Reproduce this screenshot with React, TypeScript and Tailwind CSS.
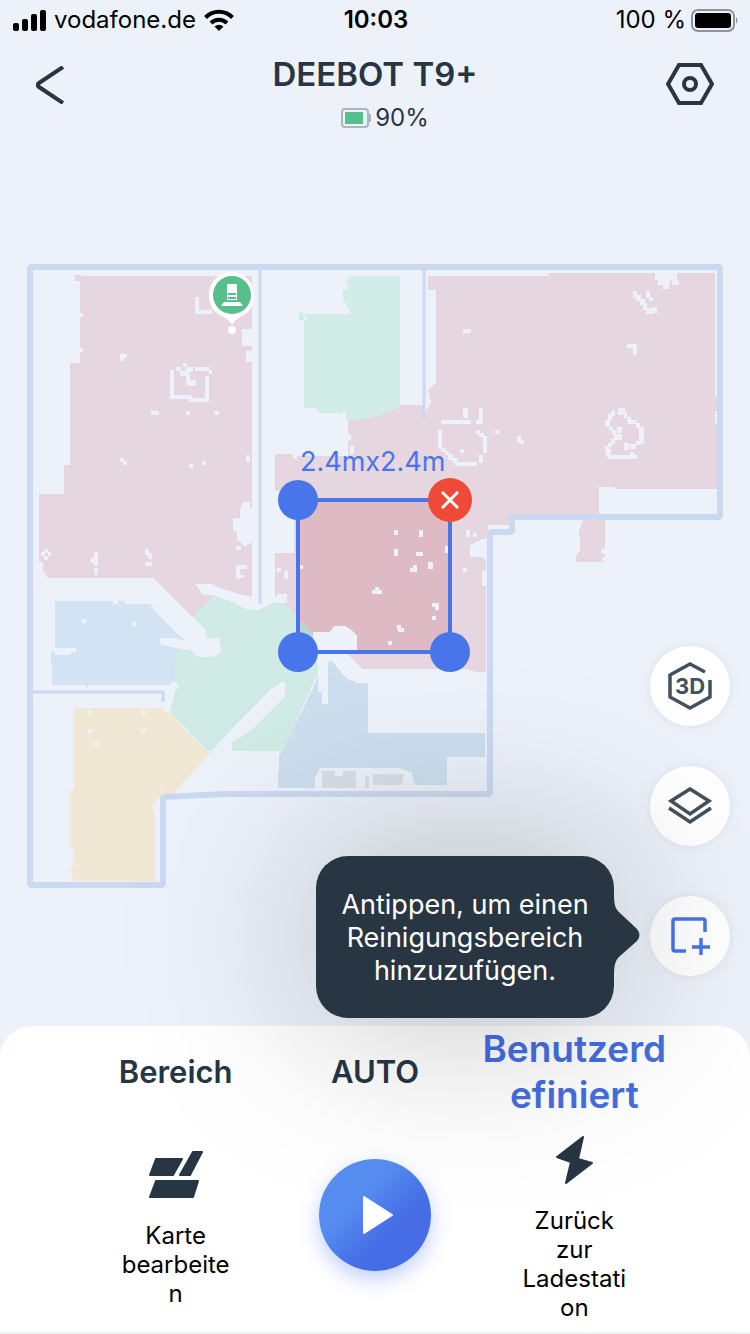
import type { ReactNode } from 'react'

type Rect = [number, number, number, number]

// Small obstacles the robot has found, in map coordinates: x, y, width, height
const obstacles: Rect[] = [
  // living room
  [195, 297, 4, 17], [195, 310, 17, 4], [120, 354, 7, 4], [120, 357, 4, 4], [170, 370, 4, 29],
  [170, 395, 22, 4], [189, 398, 20, 4], [205, 376, 4, 25], [195, 367, 14, 4], [209, 370, 3, 4],
  [183, 363, 4, 4], [176, 367, 5, 4], [180, 371, 9, 5], [186, 367, 7, 5], [186, 374, 4, 11],
  [189, 380, 7, 6], [151, 411, 8, 4], [186, 411, 4, 4], [214, 411, 5, 4], [120, 458, 4, 4],
  [123, 461, 4, 4], [189, 464, 4, 4], [202, 461, 4, 4], [246, 455, 4, 7], [242, 329, 10, 17],
  [246, 351, 6, 11], [80, 313, 3, 4], [79, 348, 4, 4], [44, 549, 4, 4], [44, 556, 4, 4],
  [41, 552, 4, 4], [48, 552, 3, 4], [39, 562, 4, 9], [94, 552, 4, 14], [91, 558, 4, 5],
  [94, 568, 4, 7], [145, 549, 4, 6], [148, 553, 4, 6], [145, 562, 7, 4], [236, 546, 5, 4],
  [236, 565, 4, 14], [236, 565, 11, 4], [236, 575, 8, 3],
  // office and kitchen
  [82, 619, 4, 4], [132, 622, 4, 4], [113, 600, 5, 4], [54, 648, 22, 4], [55, 651, 16, 4],
  [88, 710, 4, 4], [141, 710, 5, 5], [88, 729, 5, 4], [141, 729, 5, 4], [94, 742, 5, 4],
  [303, 311, 4, 4], [304, 316, 3, 4], [344, 285, 4, 4], [346, 276, 4, 3],
  // dining room
  [463, 329, 8, 4], [463, 408, 5, 10], [479, 408, 4, 16], [476, 420, 5, 4], [441, 420, 30, 4],
  [438, 430, 4, 19], [441, 448, 5, 4], [445, 451, 4, 4], [448, 454, 5, 6], [452, 458, 6, 5],
  [455, 462, 22, 4], [479, 455, 4, 8], [483, 436, 4, 17], [479, 433, 5, 4], [476, 430, 4, 4],
  [460, 449, 4, 4], [495, 430, 4, 4], [517, 436, 4, 7], [520, 440, 4, 4], [655, 272, 22, 8],
  [658, 280, 12, 5], [663, 284, 6, 5], [672, 280, 7, 5], [633, 291, 4, 7], [636, 295, 5, 6],
  [640, 299, 5, 6], [643, 303, 4, 7], [646, 308, 7, 6], [653, 307, 4, 6], [646, 291, 4, 7],
  [649, 297, 4, 4], [627, 344, 10, 4], [633, 346, 4, 9], [715, 411, 3, 13],
  [618, 408, 7, 7], [624, 412, 3, 6], [627, 417, 4, 5], [628, 420, 9, 4], [636, 423, 4, 5],
  [639, 427, 5, 17], [636, 441, 5, 4], [630, 444, 6, 5], [624, 443, 5, 7], [608, 455, 29, 4],
  [606, 449, 5, 8], [605, 446, 4, 6], [608, 443, 4, 4], [611, 439, 4, 5], [614, 434, 8, 6],
  [617, 427, 5, 6], [612, 430, 4, 5], [609, 427, 4, 4], [605, 420, 5, 7], [608, 414, 4, 7],
  [611, 411, 4, 5], [630, 452, 4, 4], [601, 549, 4, 5], [602, 557, 3, 4],
  // hallway
  [394, 530, 4, 5], [419, 530, 4, 7], [394, 549, 4, 7], [416, 552, 7, 4], [428, 562, 5, 7],
  [445, 546, 4, 7], [410, 568, 7, 4], [413, 565, 4, 7], [372, 590, 10, 4], [375, 587, 4, 4],
  [432, 603, 7, 4], [435, 606, 4, 4], [432, 616, 4, 4], [397, 625, 4, 5], [398, 628, 6, 4],
  [388, 641, 4, 4], [300, 565, 3, 4], [466, 530, 4, 7], [473, 533, 4, 4], [463, 568, 4, 4],
  [277, 568, 4, 4], [284, 571, 4, 8], [482, 571, 4, 15], [277, 594, 10, 7], [275, 598, 6, 5],
  [275, 491, 19, 62], [348, 434, 3, 6], [350, 446, 4, 8], [293, 454, 4, 5],
]

const strip = 'fill-[#edf2fa]'

function FloorMap() {
  return (
    <svg viewBox="0 140 750 886" className="block w-full" role="img" aria-label="Karte">
      <g shapeRendering="crispEdges">
        {/* rooms */}
        <path
          className="fill-[#e6d6df]"
          d="M75 275H82V276H252V597H213L192 617L152 578H48L39 565V494H64V465H70V363H80V281H75Z"
        />
        <path
          className="fill-[#e6d6df]"
          d="M428 276H549V273H715V396H717V489H616L615 487H599V514H512V525H488V538L478 541L470 545V557H482L486 560V672H476L468 669H360L345 655L314 634L284 603L275 596V454H295V456H348V420L370 418L398 408L400 405H424V415L427 409L431 402L428 390L436 383V290H428Z"
        />
        <path className="fill-[#e6d6df]" d="M584 519H605V562H576V556L580 550V544L579 530Z" />
        <path
          className="fill-[#d2ece8]"
          d="M347 276H400V405L398 408L380 414L370 418L350 420H346V411L341 413H318L317 408H304V320H299V312H304V314H350V311L343 300V290H346Z"
        />
        <path
          className="fill-[#d2e3f3]"
          d="M55 601H152L157 607L190 640L178 655L173 685H88V688H86V685H52V664H51V653L55 648Z"
        />
        <path
          className="fill-[#d0eae6]"
          d="M213 596L251 605L283 602L314 634L320 668L283 751H207L170 712L173 684L176 655L192 617Z"
        />
        <path
          className="fill-[#f0e7d5]"
          d="M74 708H167L188 733L207 752H211L173 794H163L155 802L152 806L155 817V881H70L73 876L70 870L74 865V850L70 848V790H74Z"
        />
        <path
          className="fill-[#cddfef]"
          d="M329 657L346 678L357 683H368V733H485V757H447V785H414L412 773L400 768H320L315 778V788H278L279 755L283 750L316 682L320 664Z"
        />

        {/* selected part of the hallway */}
        <path className="fill-[#debac4]" d="M298 500H450V652H356L313 634L298 619Z" />
        <path className="fill-[#b9d5cf]" d="M298 619L313 634L310 652H298Z" />

        {/* unexplored gaps */}
        <path
          className={strip}
          d="M148 578H153L182 607L192 617L206 630V638H220L221 652L213 657H197L190 650L175 648L160 644V638H175L187 641L178 634L160 617L150 604H125V578Z"
        />
        <path className={strip} d="M195 584H212L220 588L235 593L252 597H260V603H290L284 601L270 604L258 610H248L235 603L213 595H203Z" />
        <path className={strip} d="M243 502H250V508H252V542L245 547L240 541H237V531H233V518H240V509Z" />
        <path className={strip} d="M313 632H330L334 626H345L352 630L357 636V652L347 653L362 669H370V683H357L346 678L331 660L328 662V704H322V692H318V668L315 650Z" />
        <path className={strip} d="M208 754L218 744L245 715L270 690L282 682L285 683V697L250 731L232 742V754Z" />
        <path className={strip} d="M171 682H177V685H180L175 690L170 712H163V705L168 700Z" />
        <path className="fill-[#d8dfe9]" d="M322 771H335V776H343V771H356V788H322ZM373 774H404L402 785H373ZM365 776H369V788H365Z" />
        {obstacles.map(([x, y, w, h]) => (
          <rect key={`${x}-${y}-${w}`} x={x} y={y} width={w} height={h} className={strip} />
        ))}
      </g>

      {/* walls */}
      <path
        className="fill-none stroke-[#cbd8f0]"
        strokeWidth="6"
        strokeLinejoin="bevel"
        d="M30 267H720V517H512V532H490V794H225L163 797V885H30Z"
      />
      <path className="fill-none stroke-[#cbd8f0]" strokeWidth="3" d="M260 269V604M424 269V418M32 692H163V702" />

      {/* charging station pin */}
      <path
        className="fill-white"
        d="M232 272C244 272 254 282 254 295C254 309 246 314 240 317C236 319 233 322 232 325C231 322 228 319 224 317C217 314 209 309 209 295C209 282 219 272 232 272Z"
      />
      <circle cx="232" cy="295" r="19" className="fill-[#58be8c]" />
      <circle cx="232" cy="330" r="4" className="fill-white" />
      <path className="fill-white" d="M227 284H237V300H227ZM224 302H240L243 306H221Z" />
      <path className="fill-none stroke-[#58be8c]" strokeWidth="2" d="M228 294H236M228 298H236" />
    </svg>
  )
}

function SelectionBox() {
  const handle = 'absolute size-10 rounded-full bg-[#4875ea]'
  return (
    <div className="absolute left-74 top-[358px] size-39 border-4 border-[#4875ea]">
      <div className="absolute -top-15 left-0 whitespace-nowrap text-[27px] leading-10 text-[#4875ea]">
        2.4mx2.4m
      </div>
      <button className={`${handle} -left-[22px] -top-[22px]`} aria-label="Ecke oben links" />
      <button className={`${handle} -bottom-[22px] -left-[22px]`} aria-label="Ecke unten links" />
      <button className={`${handle} -bottom-[22px] -right-[22px]`} aria-label="Ecke unten rechts" />
      <button
        className="absolute -right-6 -top-6 flex size-11 items-center justify-center rounded-full bg-[#ee4a35]"
        aria-label="Bereich löschen"
      >
        <svg viewBox="0 0 18 18" className="size-[18px] fill-none stroke-white" strokeWidth="3">
          <path d="M1 1L17 17M17 1L1 17" />
        </svg>
      </button>
    </div>
  )
}

function RoundButton({ label, children }: { label: string; children: ReactNode }) {
  return (
    <button
      aria-label={label}
      className="flex size-20 items-center justify-center rounded-full bg-white shadow-[0_0_12px_rgba(70,90,130,0.1)]"
    >
      {children}
    </button>
  )
}

function MapControls() {
  return (
    <div className="absolute right-5 top-[506px] flex flex-col gap-10">
      <RoundButton label="3D-Ansicht">
        <svg viewBox="0 0 48 50" className="h-[50px] w-12 fill-none stroke-[#44515d]" strokeWidth="3.5">
          <path d="M39 11L24 3L4 14V36L24 47L44 36V19" />
          <text x="24" y="33" textAnchor="middle" className="fill-[#44515d] stroke-none text-[22px] font-bold">
            3D
          </text>
        </svg>
      </RoundButton>
      <RoundButton label="Ebenen">
        <svg viewBox="0 0 44 38" className="h-[38px] w-11 fill-none stroke-[#44515d]" strokeWidth="3.5">
          <path d="M22 2L41 14L22 27L3 14Z" />
          <path d="M1 21L22 35L43 21" />
        </svg>
      </RoundButton>
      <div className="relative mt-2.5">
        <RoundButton label="Bereich hinzufügen">
          <svg viewBox="0 0 40 40" className="size-10 fill-none stroke-[#4875ea]" strokeWidth="3.5">
            <path d="M16 35H5Q3 35 3 33V5Q3 3 5 3H33Q35 3 35 5V16M31 22V39M22 31H40" />
          </svg>
        </RoundButton>
        {/* wide glow behind the tooltip */}
        <div className="pointer-events-none absolute right-29 top-[41px] h-[162px] w-[298px] -translate-y-1/2 rounded-[32px] bg-black/26 blur-[90px]" />
        <div
          role="tooltip"
          className="absolute right-29 top-[41px] flex h-[162px] w-[298px] -translate-y-1/2 items-center justify-center whitespace-nowrap rounded-[32px] bg-[#283644] text-center text-[27px] leading-[33px] text-white"
        >
          <p>
            Antippen, um einen
            <br />
            Reinigungsbereich
            <br />
            hinzuzufügen.
          </p>
          <svg viewBox="0 0 28 90" className="absolute -right-[26px] top-[34px] h-[90px] w-7 fill-[#283644]">
            <path d="M0 0H2C2 12 2 18 8 23L25 39Q30 45 25 51L8 66C2 71 2 78 2 90H0Z" />
          </svg>
        </div>
      </div>
    </div>
  )
}

function StatusBar() {
  return (
    <div className="grid h-10 grid-cols-[1fr_auto_1fr] items-center pl-3 pr-2.5 text-2xl text-black">
      <div className="flex items-center gap-2">
        <svg viewBox="0 0 34 22" className="h-[22px] w-[34px] fill-black">
          <rect x="1" y="14" width="6" height="8" rx="2" />
          <rect x="10" y="10" width="6" height="12" rx="2" />
          <rect x="19" y="5" width="6" height="17" rx="2" />
          <rect x="28" y="1" width="6" height="21" rx="2" />
        </svg>
        <span>vodafone.de</span>
        <svg viewBox="0 0 30 22" className="h-[22px] w-[30px] fill-none stroke-black" strokeWidth="4">
          <path d="M1.500 8.500C9 .8 21 .8 28.500 8.500M7 14C11.500 9.500 18.500 9.500 23 14" />
          <path className="fill-black stroke-none" d="M10.500 17.500Q15 14 19.500 17.500L15 22Z" />
        </svg>
      </div>
      <span className="font-semibold">10:03</span>
      <div className="flex items-center justify-end gap-1">
        <span>100 %</span>
        <svg viewBox="0 0 50 24" className="h-6 w-[50px]">
          <rect x="2" y="2" width="42" height="21" rx="6" className="fill-none stroke-[#8e929a]" strokeWidth="2" />
          <rect x="5" y="5" width="36" height="15" rx="3" className="fill-black" />
          <path d="M46 9Q49 12 46 16Z" className="fill-[#8e929a]" />
        </svg>
      </div>
    </div>
  )
}

function Header() {
  return (
    <header className="grid h-25 grid-cols-[1fr_auto_1fr] items-start px-9 pt-3.5 text-[#283644]">
      <button aria-label="Zurück" className="mt-3 justify-self-start">
        <svg viewBox="0 0 28 38" className="h-[38px] w-7 fill-none stroke-[#283644]" strokeWidth="4">
          <path d="M27 1L3 17Q0 19 3 21L27 37" />
        </svg>
      </button>
      <div className="flex flex-col items-center gap-3">
        <h1 className="text-[33px] font-semibold leading-10">DEEBOT T9+</h1>
        <div className="flex items-center gap-1 pl-5 text-2xl leading-6">
          <svg viewBox="0 0 30 20" className="h-5 w-[30px]">
            <rect x="1" y="1" width="26" height="18" rx="3" className="fill-none stroke-[#adb5c0]" strokeWidth="2" />
            <rect x="4" y="4" width="18" height="12" className="fill-[#58be8c]" />
            <rect x="28" y="6" width="2" height="8" className="fill-[#adb5c0]" />
          </svg>
          90%
        </div>
      </div>
      <button aria-label="Einstellungen" className="mt-2 justify-self-end">
        <svg viewBox="0 0 48 44" className="h-11 w-12 fill-none stroke-[#283644]" strokeWidth="4">
          <path d="M13 3H35L46 22L35 41H13L2 22Z" />
          <circle cx="24" cy="22" r="6" />
        </svg>
      </button>
    </header>
  )
}

function ActionButton({ label, children }: { label: string; children: ReactNode }) {
  return (
    <button className="flex flex-col items-center gap-4.5 text-2xl leading-[29px] text-black">
      <span className="flex h-14 items-center">{children}</span>
      <span className="w-28 wrap-break-word">{label}</span>
    </button>
  )
}

function BottomSheet() {
  return (
    <section className="rounded-t-[32px] bg-white px-19 pb-2.5">
      <nav className="grid grid-cols-3 items-center justify-items-center text-[31px] font-semibold leading-[46px] text-[#283644]">
        <button>Bereich</button>
        <button>AUTO</button>
        <button className="w-48 wrap-break-word text-[37px] text-[#456fe0]" aria-current="true">
          Benutzerdefiniert
        </button>
      </nav>
      <div className="grid grid-cols-3 items-center justify-items-center pt-3.5">
        <ActionButton label="Karte bearbeiten">
          <svg
            viewBox="0 0 54 48"
            className="h-12 w-[54px] fill-[#283644] stroke-[#283644]"
            strokeWidth="2"
            strokeLinejoin="round"
          >
            <path d="M7 8H33L24 24H1ZM44 1H53L41 24H31ZM7 30H49L44 46H1Z" />
          </svg>
        </ActionButton>
        <button
          aria-label="Reinigung starten"
          className="relative mb-6 flex size-28 items-center justify-center rounded-full bg-linear-135 from-[#568cf0] from-35% to-[#466ce6] to-65% shadow-[0_8px_20px_rgba(72,117,234,0.35)]"
        >
          <svg viewBox="0 0 32 40" className="ml-1.5 h-10 w-8 fill-white stroke-white" strokeWidth="2" strokeLinejoin="round">
            <path d="M2 2L30 20L2 38Z" />
          </svg>
        </button>
        <ActionButton label="Zurück zur Ladestation">
          <svg
            viewBox="0 0 38 50"
            className="h-[50px] w-[38px] fill-[#283644] stroke-[#283644]"
            strokeWidth="2"
            strokeLinejoin="round"
          >
            <path d="M28 2L2 22L16 27L11 48L37 28L23 24Z" />
          </svg>
        </ActionButton>
      </div>
    </section>
  )
}

export default function App() {
  return (
    <main className="min-h-screen bg-[#edf2fa] font-['Inter','Liberation_Sans',sans-serif]">
      <StatusBar />
      <Header />
      <div className="relative">
        <FloorMap />
        <SelectionBox />
        <MapControls />
      </div>
      <BottomSheet />
    </main>
  )
}
